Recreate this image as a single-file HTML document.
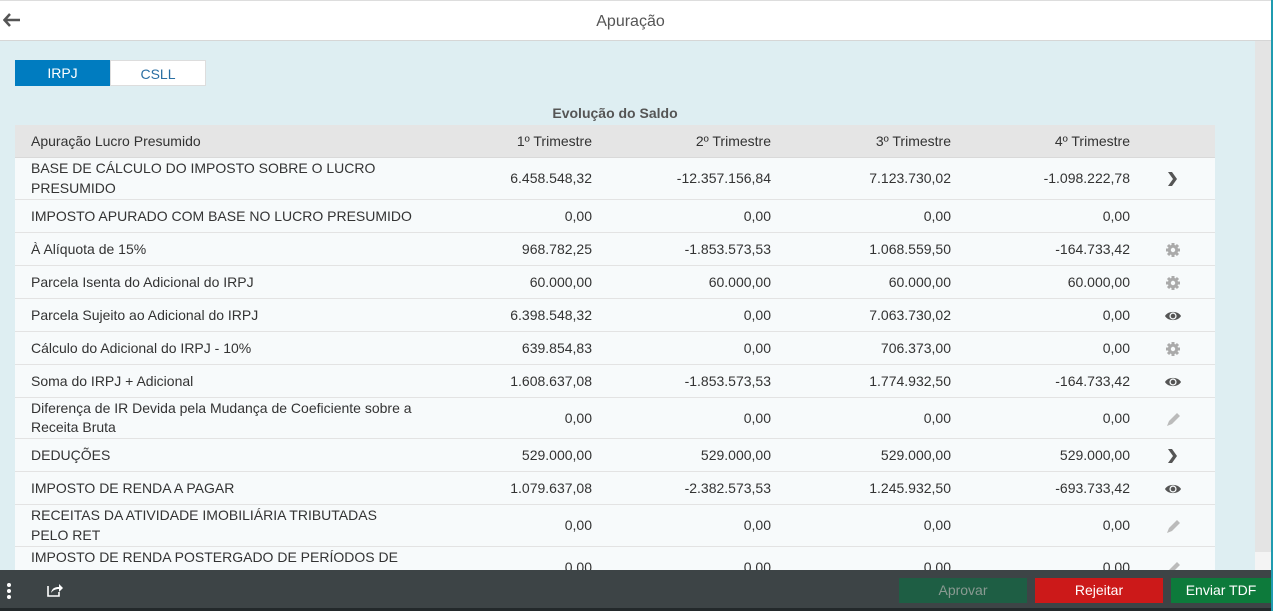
<!DOCTYPE html>
<html><head><meta charset="utf-8"><style>
*{box-sizing:border-box;margin:0;padding:0}
body{width:1273px;height:611px;overflow:hidden;font-family:"Liberation Sans",sans-serif;background:#deeef2;position:relative;color:#333}
.hdr{position:absolute;left:0;top:0;width:1271px;height:41px;background:#fff;border-top:1px solid #ddd;border-bottom:1px solid #d6d6d6}
.hdr .t{position:absolute;left:-10px;right:0;top:12px;text-align:center;font-size:16px;color:#555}
.back{position:absolute;left:3px;top:12px}
.sb{position:absolute;left:1255px;top:41px;width:16px;height:529px;background:#e4e4e4}
.sb2{position:absolute;left:1255px;top:552px;width:16px;height:18px;background:#f4f4f4}
.teal{position:absolute;left:1271px;top:0;width:2px;height:611px;background:#1f9bb0}
.tabs{position:absolute;left:15px;top:60px;display:flex;font-size:14px}
.tabs div{width:95px;height:26px;line-height:26px;text-align:center}
.t1{background:#007cc0;color:#fff}
.t2{background:#fff;color:#2a6fa3;border:1px solid #ddd;width:96px!important}
.ttl{position:absolute;left:15px;width:1200px;top:105px;text-align:center;font-weight:bold;font-size:14px;color:#555}
table{position:absolute;left:15px;top:125px;width:1200px;border-collapse:collapse;font-size:14px;color:#333}
th{background:#e5e5e5;font-weight:normal;height:32px;text-align:right;padding-right:0;border-bottom:1px solid #d9d9d9}
td{background:#f7fafb;border-bottom:1px solid #e3e3e3;text-align:right;height:33px;line-height:20px}
td:first-child,th:first-child{text-align:left;padding-left:16px}
tr.d td{height:42px}
tr.d2 td{height:41px;line-height:19px;padding-top:1px}
.ic{text-align:center;width:85px;color:#666}
.ic svg{vertical-align:middle}
.ft{position:absolute;left:0;top:570px;width:1271px;height:41px;background:#3d4446;border-bottom:3px solid #23292b}
.btn{position:absolute;top:8px;height:25px;line-height:25px;text-align:center;font-size:14px;color:#fff}
</style></head><body>
<div class="hdr"><svg class="back" width="18" height="14" viewBox="0 0 18 14"><path d="M7 1L1.5 7 7 13M2 7h15" stroke="#555" stroke-width="2.5" fill="none"/></svg><div class="t">Apuração</div></div>
<div class="sb"></div><div class="sb2"></div><div class="teal"></div>
<div class="tabs"><div class="t1">IRPJ</div><div class="t2">CSLL</div></div>
<div class="ttl">Evolução do Saldo</div>
<svg width="0" height="0" style="position:absolute"><defs>
<g id="gear"><circle cx="8" cy="8" r="5.2" fill="#aaa"/><g stroke="#aaa" stroke-width="3"><path d="M8 1v14M1 8h14M3 3l10 10M13 3L3 13"/></g><circle cx="8" cy="8" r="2.2" fill="#f7fafb"/></g>
<g id="eye"><path d="M0 7C3 1.5 13 1.5 16 7 13 12.5 3 12.5 0 7Z" fill="#555"/><circle cx="8" cy="7" r="3.6" fill="#f7fafb"/><circle cx="8" cy="7" r="2.3" fill="#555"/></g>
<g id="pen"><path d="M2 15l2-5 8-8 3 3-8 8z" fill="#bbb"/></g>
<g id="chev"><path d="M3 1h4l5 7-5 7H3l5-7z" fill="#555"/></g>
</defs></svg>
<table>
<tr><th style="width:430px">Apuração Lucro Presumido</th><th style="width:147px">1º Trimestre</th><th style="width:179px">2º Trimestre</th><th style="width:180px">3º Trimestre</th><th style="width:179px">4º Trimestre</th><th></th></tr>
<tr class="d"><td>BASE DE CÁLCULO DO IMPOSTO SOBRE O LUCRO<br>PRESUMIDO</td><td>6.458.548,32</td><td>-12.357.156,84</td><td>7.123.730,02</td><td>-1.098.222,78</td><td class="ic"><svg width="16" height="16"><use href="#chev"/></svg></td></tr>
<tr><td>IMPOSTO APURADO COM BASE NO LUCRO PRESUMIDO</td><td>0,00</td><td>0,00</td><td>0,00</td><td>0,00</td><td class="ic"></td></tr>
<tr><td>À Alíquota de 15%</td><td>968.782,25</td><td>-1.853.573,53</td><td>1.068.559,50</td><td>-164.733,42</td><td class="ic"><svg width="16" height="16"><use href="#gear"/></svg></td></tr>
<tr><td>Parcela Isenta do Adicional do IRPJ</td><td>60.000,00</td><td>60.000,00</td><td>60.000,00</td><td>60.000,00</td><td class="ic"><svg width="16" height="16"><use href="#gear"/></svg></td></tr>
<tr><td>Parcela Sujeito ao Adicional do IRPJ</td><td>6.398.548,32</td><td>0,00</td><td>7.063.730,02</td><td>0,00</td><td class="ic"><svg width="16" height="14"><use href="#eye"/></svg></td></tr>
<tr><td>Cálculo do Adicional do IRPJ - 10%</td><td>639.854,83</td><td>0,00</td><td>706.373,00</td><td>0,00</td><td class="ic"><svg width="16" height="16"><use href="#gear"/></svg></td></tr>
<tr><td>Soma do IRPJ + Adicional</td><td>1.608.637,08</td><td>-1.853.573,53</td><td>1.774.932,50</td><td>-164.733,42</td><td class="ic"><svg width="16" height="14"><use href="#eye"/></svg></td></tr>
<tr class="d2"><td>Diferença de IR Devida pela Mudança de Coeficiente sobre a<br>Receita Bruta</td><td>0,00</td><td>0,00</td><td>0,00</td><td>0,00</td><td class="ic"><svg width="16" height="16"><use href="#pen"/></svg></td></tr>
<tr><td>DEDUÇÕES</td><td>529.000,00</td><td>529.000,00</td><td>529.000,00</td><td>529.000,00</td><td class="ic"><svg width="16" height="16"><use href="#chev"/></svg></td></tr>
<tr><td>IMPOSTO DE RENDA A PAGAR</td><td>1.079.637,08</td><td>-2.382.573,53</td><td>1.245.932,50</td><td>-693.733,42</td><td class="ic"><svg width="16" height="14"><use href="#eye"/></svg></td></tr>
<tr class="d"><td>RECEITAS DA ATIVIDADE IMOBILIÁRIA TRIBUTADAS<br>PELO RET</td><td>0,00</td><td>0,00</td><td>0,00</td><td>0,00</td><td class="ic"><svg width="16" height="16"><use href="#pen"/></svg></td></tr>
<tr class="d"><td>IMPOSTO DE RENDA POSTERGADO DE PERÍODOS DE<br>APURAÇÃO</td><td>0,00</td><td>0,00</td><td>0,00</td><td>0,00</td><td class="ic"><svg width="16" height="16"><use href="#pen"/></svg></td></tr>
</table>
<div class="ft">
<svg style="position:absolute;left:6px;top:12px" width="6" height="18"><circle cx="3" cy="3" r="2" fill="#fff"/><circle cx="3" cy="9" r="2" fill="#fff"/><circle cx="3" cy="15" r="2" fill="#fff"/></svg>
<svg style="position:absolute;left:46px;top:12px" width="17" height="16"><path d="M2 4v10h11v-4" stroke="#fff" stroke-width="1.6" fill="none"/><path d="M5 11c1-5 4-6 8-6V2l4 4-4 4V7c-3 0-6 1-8 4z" fill="#fff"/></svg>
<div class="btn" style="left:899px;width:128px;background:#1e5e44;color:#8a9a92">Aprovar</div>
<div class="btn" style="left:1035px;width:128px;background:#cc1919">Rejeitar</div>
<div class="btn" style="left:1171px;width:100px;background:#0d7a3b">Enviar TDF</div>
</div>
</body></html>
